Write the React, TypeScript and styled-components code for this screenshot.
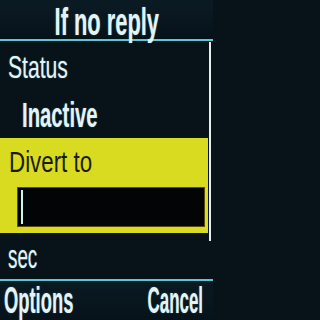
import React from "react";
import styled, { createGlobalStyle } from "styled-components";

const GlobalStyle = createGlobalStyle`
  html, body {
    margin: 0;
    padding: 0;
    background: #071219;
    overflow: hidden;
  }
  body {
    font-family: "Liberation Sans", Arial, sans-serif;
  }
`;

const Screen = styled.div`
  width: 213px;
  height: 320px;
  display: flex;
  flex-direction: column;
  overflow: hidden;
  background: #071219;
`;

const TitleBar = styled.div`
  box-sizing: border-box;
  height: 41px;
  padding-top: 3px;
  border-bottom: 2px solid #5cc6d2;
  display: flex;
  justify-content: center;
  align-items: flex-start;
  background: linear-gradient(180deg, #0b1b24 0%, #06121a 100%);
`;

const Label = styled.span<{
  $size: number;
  $scale: number;
  $bold?: boolean;
  $dark?: boolean;
  $origin?: string;
}>`
  display: inline-block;
  flex-shrink: 0;
  font-size: ${(p) => p.$size}px;
  line-height: 1;
  font-weight: ${(p) => (p.$bold ? 700 : 400)};
  color: ${(p) => (p.$dark ? "#1b1d0c" : "#e4f4f6")};
  text-shadow: ${(p) =>
    p.$dark ? "none" : "0 0 2px rgba(120, 210, 230, 0.45)"};
  white-space: nowrap;
  transform: scaleX(${(p) => p.$scale});
  transform-origin: ${(p) => p.$origin ?? "left"} center;
`;

const Content = styled.div`
  position: relative;
  flex: 1;
  display: flex;
  flex-direction: column;
`;

const Row = styled.div<{ $height?: number; $top: number; $left: number }>`
  box-sizing: border-box;
  height: ${(p) => (p.$height ? `${p.$height}px` : "auto")};
  padding-top: ${(p) => p.$top}px;
  padding-left: ${(p) => p.$left}px;
`;

const Highlight = styled.div`
  box-sizing: border-box;
  height: 95px;
  margin-right: 5px;
  padding: 10px 0 6px 9px;
  background: #d8db1f;
  display: flex;
  flex-direction: column;
  align-items: flex-start;
`;

const InputBox = styled.div`
  box-sizing: border-box;
  align-self: stretch;
  height: 40px;
  margin: 10px 3px 0 8px;
  padding: 2px 0 2px 3px;
  background: #030405;
  border: 1px solid #5a4a12;
  display: flex;
`;

const Cursor = styled.div`
  width: 2px;
  background: #d8eef2;
`;

const ScrollBar = styled.div`
  position: absolute;
  top: 1px;
  right: 2px;
  width: 2px;
  height: 199px;
  background: #e6eeee;
`;

const SoftKeys = styled.div`
  box-sizing: border-box;
  height: 41px;
  padding: 2px 10px 0 4px;
  border-top: 2px solid #5cc6d2;
  display: flex;
  overflow: hidden;
  background: linear-gradient(180deg, #0a1a22 0%, #06121a 100%);
`;

const SoftKey = styled.div<{ $align: "start" | "end" }>`
  flex: 1;
  min-width: 0;
  display: flex;
  justify-content: ${(p) => (p.$align === "end" ? "flex-end" : "flex-start")};
`;

export default function App() {
  return (
    <>
      <GlobalStyle />
      <Screen>
        <TitleBar>
          <Label $size={38} $scale={0.575} $bold $origin="center">
            If no reply
          </Label>
        </TitleBar>
        <Content>
          <Row $height={48} $top={10} $left={8}>
            <Label $size={32} $scale={0.66}>
              Status
            </Label>
          </Row>
          <Row $height={49} $top={8} $left={22}>
            <Label $size={35} $scale={0.58} $bold>
              Inactive
            </Label>
          </Row>
          <Highlight>
            <Label $size={29} $scale={0.77} $dark>
              Divert to
            </Label>
            <InputBox>
              <Cursor />
            </InputBox>
          </Highlight>
          <Row $top={7} $left={8}>
            <Label $size={33} $scale={0.57}>
              sec
            </Label>
          </Row>
          <ScrollBar />
        </Content>
        <SoftKeys>
          <SoftKey $align="start">
            <Label $size={36} $scale={0.51} $bold>
              Options
            </Label>
          </SoftKey>
          <SoftKey $align="end">
            <Label $size={36} $scale={0.47} $bold $origin="right">
              Cancel
            </Label>
          </SoftKey>
        </SoftKeys>
      </Screen>
    </>
  );
}
